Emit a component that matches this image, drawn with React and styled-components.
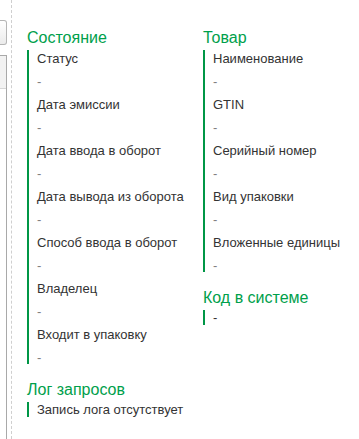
import styled, { createGlobalStyle } from "styled-components";

const GlobalStyle = createGlobalStyle`
  html, body {
    margin: 0;
    padding: 0;
    background: #ffffff;
  }
  body {
    font-family: Arial, "Liberation Sans", sans-serif;
    color: #333333;
  }
`;

const Page = styled.div`
  display: flex;
  height: 439px;
  overflow: hidden;
`;

const SidePane = styled.div`
  width: 7px;
  display: flex;
  flex-direction: column;
  padding-top: 20px;
  gap: 10px;
  box-sizing: border-box;
`;

const SideButton = styled.div`
  height: 25px;
  box-sizing: border-box;
  border: 1px solid #b5b5b5;
  border-left: none;
  border-radius: 0 3px 3px 0;
  background: linear-gradient(#ffffff, #ebebeb);
`;

const SideTable = styled.div`
  flex: 1;
  border: 1px solid #a9a9a9;
  border-left: none;
  border-bottom: none;
  background: #ffffff;
`;

const SideTableHead = styled.div`
  height: 32px;
  background: #f2f2f2;
  border-bottom: 1px solid #d6d6d6;
`;

const Splitter = styled.div`
  margin-left: 4px;
  border-left: 1px dashed #cfcfcf;
`;

const Content = styled.div`
  flex: 1;
  display: grid;
  grid-template-columns: 176px 1fr;
  align-items: start;
  padding: 28px 0 0 15px;
`;

const Column = styled.div`
  display: flex;
  flex-direction: column;
  gap: 16px;
`;

const Group = styled.section`
  display: flex;
  flex-direction: column;
  gap: 3px;
`;

const GroupTitle = styled.div`
  font-size: 16px;
  line-height: 19px;
  color: #00a04b;
  white-space: nowrap;
`;

const GroupBody = styled.div`
  border-left: 2px solid #009646;
  padding-left: 8px;
  display: flex;
  flex-direction: column;
  gap: 8px;
`;

const Field = styled.div`
  display: flex;
  flex-direction: column;
  gap: 8px;
`;

const Label = styled.div`
  font-size: 13px;
  line-height: 17px;
  color: #333333;
  white-space: nowrap;
`;

const Value = styled.div`
  font-size: 13px;
  line-height: ${(p) => (p.$single ? "15px" : "13px")};
  color: ${(p) => (p.$muted ? "#7f7f7f" : "#333333")};
  white-space: nowrap;
`;

const stateFields = [
  "Статус",
  "Дата эмиссии",
  "Дата ввода в оборот",
  "Дата вывода из оборота",
  "Способ ввода в оборот",
  "Владелец",
  "Входит в упаковку",
];

const goodsFields = [
  "Наименование",
  "GTIN",
  "Серийный номер",
  "Вид упаковки",
  "Вложенные единицы",
];

function FieldGroup({ title, fields }) {
  return (
    <Group>
      <GroupTitle>{title}</GroupTitle>
      <GroupBody>
        {fields.map((f) => (
          <Field key={f}>
            <Label>{f}</Label>
            <Value $muted>-</Value>
          </Field>
        ))}
      </GroupBody>
    </Group>
  );
}

function SingleGroup({ title, text, muted }) {
  return (
    <Group>
      <GroupTitle>{title}</GroupTitle>
      <GroupBody>
        <Value $single $muted={muted}>{text}</Value>
      </GroupBody>
    </Group>
  );
}

export default function App() {
  return (
    <>
      <GlobalStyle />
      <Page>
        <SidePane>
          <SideButton />
          <SideTable>
            <SideTableHead />
          </SideTable>
        </SidePane>
        <Splitter />
        <Content>
          <Column>
            <FieldGroup title="Состояние" fields={stateFields} />
            <SingleGroup title="Лог запросов" text="Запись лога отсутствует" />
          </Column>
          <Column>
            <FieldGroup title="Товар" fields={goodsFields} />
            <SingleGroup title="Код в системе" text="-" />
          </Column>
        </Content>
      </Page>
    </>
  );
}
